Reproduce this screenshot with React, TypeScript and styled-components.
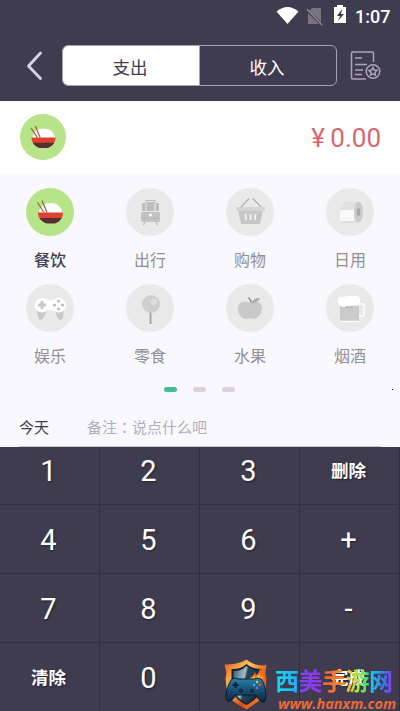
import React from "react";
import styled, { createGlobalStyle } from "styled-components";

const Global = createGlobalStyle`
  * { box-sizing: border-box; }
  html, body { margin: 0; padding: 0; overflow: hidden; }
  body { font-family: Roboto, "Noto Sans CJK SC", sans-serif; background: #faf8ff; }
  svg { display: block; flex: none; }
`;

const Screen = styled.div`
  position: relative;
  width: 400px;
  height: 711px;
  overflow: hidden;
  display: flex;
  flex-direction: column;
  background: #faf8ff;
`;

const Header = styled.header`
  height: 101px;
  flex: none;
  background: #403c50;
`;

const StatusBar = styled.div`
  height: 32px;
  display: flex;
  justify-content: flex-end;
  padding: 5px 9px 0 0;
`;

const Clock = styled.span`
  width: 36px;
  margin-left: 8px;
  color: #fff;
  font-size: 18px;
  line-height: 24px;
  font-weight: 500;
  white-space: nowrap;
`;

const NavBar = styled.div`
  display: flex;
  align-items: flex-start;
  padding: 13px 18px 0 23px;
`;

const BackButton = styled.div`
  width: 39px;
  padding-top: 5px;
`;

const Segments = styled.div`
  display: flex;
  width: 275px;
  height: 41px;
  border: 1px solid #a5a2b1;
  border-radius: 6px;
  overflow: hidden;
`;

const Segment = styled.div<{ $active?: boolean }>`
  flex: 1;
  display: flex;
  align-items: center;
  justify-content: center;
  padding: 2px 2px 0 0;
  font-size: 17.5px;
  color: ${(p) => (p.$active ? "#403c50" : "#fff")};
  background: ${(p) => (p.$active ? "#fff" : "transparent")};
  &:last-child { border-left: 1px solid #a5a2b1; }
`;

const BillButton = styled.div`
  margin-left: 13px;
  padding-top: 6px;
`;

const AmountBar = styled.section`
  height: 73px;
  flex: none;
  display: flex;
  align-items: flex-start;
  justify-content: space-between;
  padding: 13px 19px 0 20px;
  background: #fff;
`;

const Amount = styled.div`
  color: #da6670;
  font-size: 26px;
  line-height: 30px;
  padding-top: 9px;
  word-spacing: -1px;
`;

const CategoryGrid = styled.section`
  display: grid;
  grid-template-columns: repeat(4, 100px);
  grid-auto-rows: 96px;
  padding-top: 14px;
  flex: none;
`;

const Category = styled.div<{ $active?: boolean }>`
  display: flex;
  flex-direction: column;
  align-items: center;
  font-size: 16px;
  line-height: 22px;
  gap: 14px;
  color: ${(p) => (p.$active ? "#403c50" : "#929096")};
  font-weight: ${(p) => (p.$active ? 500 : 400)};
`;

const Disc = styled.div<{ $active?: boolean; $size: number }>`
  width: ${(p) => p.$size}px;
  height: ${(p) => p.$size}px;
  flex: none;
  border-radius: 50%;
  background: ${(p) => (p.$active ? "#b7e389" : "#e9e9ea")};
`;

const Pager = styled.div`
  display: flex;
  justify-content: center;
  gap: 16px;
  padding: 7px 1px 0 0;
  height: 32px;
  flex: none;
`;

const PageDot = styled.span<{ $active?: boolean }>`
  width: 13px;
  height: 5px;
  border-radius: 3px;
  background: ${(p) => (p.$active ? "#43bd94" : "#d7d5da")};
`;

const NoteRow = styled.div`
  display: flex;
  height: 35px;
  margin: 0 19px;
  flex: none;
  border-bottom: 1px solid #c6c4cf;
  font-size: 15px;
  line-height: 33px;
  color: #403c50;
`;

const Placeholder = styled.span`
  margin-left: 38px;
  color: #b1afb6;
`;

/* The Traditional Chinese face centres the full-width colon in its cell. */
const Colon = styled.span`
  font-family: "Noto Sans CJK TC", sans-serif;
  line-height: 0;
`;

const Keypad = styled.div`
  height: 265px;
  flex: none;
  display: grid;
  grid-template-columns: repeat(4, 100px);
  grid-template-rows: 58px repeat(3, 69px);
  background: #403c50;
`;

const Key = styled.div<{ $word?: boolean }>`
  display: flex;
  align-items: flex-end;
  justify-content: center;
  padding: 0 2px 0 0;
  height: 100%;
  border-right: 1px solid #322f40;
  border-bottom: 1px solid #322f40;
  color: #fff;
  text-shadow: 1px 1px 2px #24212e;
  font-size: ${(p) => (p.$word ? 17.5 : 29)}px;
  font-weight: ${(p) => (p.$word ? 700 : 400)};
  line-height: 65px;
`;

const Speck = styled.span`
  position: absolute;
  left: 392px;
  top: 389px;
  width: 1px;
  height: 1px;
  background: #000;
`;

const Watermark = styled.div`
  position: absolute;
  left: 222px;
  top: 658px;
  display: flex;
`;

const BrandText = styled.div`
  margin-left: 6px;
  padding-top: 6px;
`;

const BrandName = styled.div`
  display: flex;
  font-size: 24px;
  line-height: 31px;
  font-weight: 700;
  font-family: "Noto Sans CJK SC", sans-serif;
`;

const Glyph = styled.span<{ $fill: string }>`
  width: 23.5px;
  background: ${(p) => p.$fill};
  background-clip: text;
  -webkit-background-clip: text;
  color: transparent;
`;

const BrandUrl = styled.div`
  padding-left: 3px;
  font: italic 700 14.5px/17px "Open Sans", "Noto Sans", sans-serif;
  color: #e9693b;
  white-space: nowrap;
`;

const Noodles = ({ size }: { size: number }) => (
  <svg width={size} height={size} viewBox="0 0 48 48">
    <path d="M13 25C14 18 18 15 24.500 15S35 18 36.500 25z" fill="#fff" />
    <path d="M12 24.500h25c0 4-1.500 6-3 7.500H15c-2-2-3-4-3-7.500z" fill="#df4130" />
    <path d="M13.500 30h22c-2 4-5.500 5.500-8 5.500h-5c-4 0-7-2-9-5.500z" fill="#56302f" />
    <path d="M11.500 14.500 18 24.500M16 12.500l5 12" stroke="#9a6740" strokeWidth="1.300" />
  </svg>
);

const Train = () => (
  <svg width="48" height="48" viewBox="0 0 48 48">
    <path d="M20 15v-2.500h9V15" stroke="#bbb" fill="none" />
    <rect x="16" y="15" width="3.500" height="8" rx=".8" fill="#bdbdbe" />
    <rect x="20.500" y="14" width="8" height="9" fill="#bdbdbe" />
    <rect x="29.500" y="15" width="3.500" height="8" rx=".8" fill="#bdbdbe" />
    <rect x="15" y="24" width="19" height="10" rx="1" fill="#c3c3c4" />
    <path d="M16 30h17" stroke="#b5b5b6" />
    <path d="m19 34-1.500 3M30 34l1.500 3" stroke="#bbb" strokeWidth="1.300" />
    <circle cx="24.500" cy="27" r="1.500" fill="#fff" />
  </svg>
);

const Basket = () => (
  <svg width="48" height="48" viewBox="0 0 48 48">
    <path d="m15 19 8-8.500M35 19l-8-8.500" stroke="#b4b4b5" strokeWidth="1.500" />
    <path d="M12 22h25l-3 14H15z" fill="#c6c6c7" />
    <rect x="10" y="19" width="29" height="4" rx="1" fill="#d4d4d5" />
    <path d="m19.500 26 .5 6M24.500 26v6M29.500 26l-.5 6" stroke="#f4f4f4" strokeWidth="1.600" />
  </svg>
);

const Roll = () => (
  <svg width="48" height="48" viewBox="0 0 48 48">
    <path d="M14 21c1-5 5-7.500 10-7.500h8L28 34H14z" fill="#e1e1e2" />
    <path d="M14 22h14v12H14z" fill="#f8f8f8" />
    <path d="M15 34h16" stroke="#d0d0d1" />
    <ellipse cx="32.500" cy="24" rx="4.500" ry="10.500" fill="#cbcbcc" />
    <ellipse cx="32.500" cy="24" rx="1.700" ry="4" fill="#a6a6a7" />
  </svg>
);

const Gamepad = () => (
  <svg width="48" height="48" viewBox="0 0 48 48">
    <path d="M11 26h10l-3 7q-1.500 3-3.500 3t-2.500-3zM29 26h9l-1 7q-.5 3-2.500 3T31 33z" fill="#c9c9ca" />
    <path d="M16 14c4 0 6 2 9 2s5-2 8-2a7.200 7.200 0 1 1-5 12.500h-7A7.200 7.200 0 1 1 16 14z" fill="#fff" />
    <path d="M16 17v8M12 21h8" stroke="#c8c8c9" strokeWidth="2.800" />
    <g fill="#bcbcbd"><circle cx="32.500" cy="17" r="1.600" /><circle cx="32.500" cy="25" r="1.600" /><circle cx="28.500" cy="21" r="1.600" /><circle cx="36.500" cy="21" r="1.600" /></g>
  </svg>
);

const Lollipop = () => (
  <svg width="48" height="48" viewBox="0 0 48 48">
    <path d="M24.500 28v12" stroke="#a8a8a9" strokeWidth="2" />
    <circle cx="25" cy="20" r="9" fill="#cececf" />
    <ellipse cx="28" cy="18" rx="3" ry="3.500" fill="#dededf" />
  </svg>
);

const Apple = () => (
  <svg width="48" height="48" viewBox="0 0 48 48">
    <path d="M24 19c-8-4-12 1-12 6 0 6 5 10.500 8 10 2-1 5-1 7 0 4 0 9-5 9-11 0-5-5-8-12-5z" fill="#c9c9ca" />
    <path d="M25 19q0-3-2.500-5.500" stroke="#949495" strokeWidth="1.500" fill="none" />
    <path d="M25 19q2-5 9-5-2 5.500-9 5z" fill="#acacad" />
  </svg>
);

const Beer = () => (
  <svg width="48" height="48" viewBox="0 0 48 48">
    <path d="M33 20h3q2 0 2 2v8q0 2-2 2h-3" stroke="#f9f9f9" strokeWidth="2" fill="none" />
    <path d="M14 22h19v15H14z" fill="#cbcbcc" />
    <path d="M14 37.500h19" stroke="#fafafa" strokeWidth="1.500" />
    <path d="M12 17c-1-4 3-5 6-4 4-2 8-1 10-1 5-1 7 2 6 6-1 4-4 4-6 3-2 0-3 3-6 0-2 3-9 3-10-4z" fill="#fff" />
    <path d="m19 24 2-2 2 2 2-2 2 2" fill="#b5b5b6" />
  </svg>
);

const Emblem = () => (
  <svg width="47" height="52" viewBox="0 0 47 52">
    <defs>
      <linearGradient id="flame" x1="0" y1="0" x2="1" y2="1">
        <stop offset="0" stopColor="#e95517" /><stop offset=".35" stopColor="#ffc65b" />
        <stop offset=".65" stopColor="#e54713" /><stop offset="1" stopColor="#ffb12e" />
      </linearGradient>
      <linearGradient id="steel" x1="0" y1="0" x2="1" y2=".3">
        <stop offset="0" stopColor="#385e74" /><stop offset=".46" stopColor="#a5bdc8" />
        <stop offset=".54" stopColor="#24465e" /><stop offset="1" stopColor="#142d40" />
      </linearGradient>
      <linearGradient id="pad" x2="0" y2="1"><stop stopColor="#2682ad" /><stop offset=".55" stopColor="#174a6c" /><stop offset="1" stopColor="#0c2438" /></linearGradient>
    </defs>
    <path d="M24.500 1.500c6 5 12 6 18 6l2-1-1 8 1 6-1 10-2 9-7 5-10 7-10-6-8-6-2-10-1-9 1-6-2-8c8 0 16-1 22-5z" fill="url(#flame)" />
    <path d="M24.500 6c5 4 9 5 15 5v19c-2 9-8 13-15 17-8-4-13-9-15-17V11c6 0 11-1 15-5z" fill="#142534" />
    <path d="M24.500 8c5 4 8 4 13 4v17c-2 8-6 12-13 16-8-4-12-8-13-16V13c5 0 9-1 13-5z" fill="url(#steel)" />
    <path d="M25 21c4-1 7-4 8-7l1 3c2-1 4-4 4-7 2 4 4 4 5 6-1 3 1 5-1 8H26z" fill="#ef701d" />
    <path d="m29 21 4-3v3l5-5-1 4 4-2-3 5h-9z" fill="#ffd25e" />
    <path d="M10 21q4-2 6 0h16q3-2 7 0c3 3 5 11 5 18 0 8-6 6-10-2H14c-5 8-10 8-10 2 0-6 3-15 6-18z" fill="url(#pad)" stroke="#071c2b" />
    <path d="M13.500 24v6M10.500 27h6" stroke="#0a2435" strokeWidth="2.200" />
    <circle cx="19" cy="33" r="3" fill="#103149" stroke="#286584" strokeWidth=".6" />
    <circle cx="30" cy="33" r="3" fill="#103149" stroke="#286584" strokeWidth=".6" />
    <circle cx="35" cy="24" r="1.200" fill="#f4bd4b" /><circle cx="38" cy="27" r="1.200" fill="#e95037" />
    <circle cx="32" cy="27" r="1.200" fill="#4db7e0" /><circle cx="35" cy="30" r="1.200" fill="#a85ed0" />
  </svg>
);

const StatusIcons = () => (
  <svg width="72" height="22" viewBox="274 4 72 22">
    <path d="M275.500 10.500q11-9 22 0L286.500 23z" fill="#fff" />
    <path d="m308 10 3-3h9v16h-13v-12z" fill="#777382" />
    <path d="m305 8 16 16" stroke="#403c50" strokeWidth="3" />
    <path d="m306 8 15 16" stroke="#8e8a98" strokeWidth="1.400" />
    <path d="M336 4h6v2h3v16h-12V6h3z" fill="#fff" />
    <path d="m341 8-5 7h3l-2 5 6-7h-3z" fill="#403c50" />
  </svg>
);

const BackIcon = () => (
  <svg width="20" height="32" viewBox="0 0 20 32">
    <path d="M17.500 3 5.500 16l12 12.500" fill="none" stroke="#d9d5e4" strokeWidth="2.800" strokeLinecap="round" strokeLinejoin="round" />
  </svg>
);

const BillIcon = () => (
  <svg width="32" height="32" viewBox="350 51 32 32" fill="none" stroke="#aaa6b6" strokeWidth="1.500">
    <path d="M373.500 62V53q0-1-1-1h-20q-1 0-1 1v25q0 1 1 1H366M355 58h7M355 64.500h12M355 70h8M355 74.500h7" />
    <circle cx="373" cy="71.500" r="6.800" />
    <path d="m373 67.500 1.200 2.500 2.800.4-2 2 .4 2.700-2.400-1.300-2.500 1.300.5-2.700-2-2 2.700-.4z" />
  </svg>
);

const categories = [
  { label: "餐饮", icon: <Noodles size={48} />, active: true },
  { label: "出行", icon: <Train /> },
  { label: "购物", icon: <Basket /> },
  { label: "日用", icon: <Roll /> },
  { label: "娱乐", icon: <Gamepad /> },
  { label: "零食", icon: <Lollipop /> },
  { label: "水果", icon: <Apple /> },
  { label: "烟酒", icon: <Beer /> },
];

const keys = ["1", "2", "3", "删除", "4", "5", "6", "+", "7", "8", "9", "-", "清除", "0", "", "完成"];

const brand = [
  ["西", "linear-gradient(90deg,#12dff0,#25a9fa)"],
  ["美", "linear-gradient(90deg,#7148f4,#a22ef0)"],
  ["手", "linear-gradient(90deg,#f05a38,#ff9424)"],
  ["游", "linear-gradient(90deg,#ffb82d,#a6ef40 55%,#27db9a)"],
  ["网", "linear-gradient(90deg,#13d7ef,#367bf7 60%,#9134ed)"],
];

export default function App() {
  return (
    <Screen>
      <Global />
      <Header>
        <StatusBar><StatusIcons /><Clock>1:07</Clock></StatusBar>
        <NavBar>
          <BackButton><BackIcon /></BackButton>
          <Segments><Segment $active>支出</Segment><Segment>收入</Segment></Segments>
          <BillButton><BillIcon /></BillButton>
        </NavBar>
      </Header>
      <AmountBar>
        <Disc $active $size={46}><Noodles size={46} /></Disc>
        <Amount>¥ 0.00</Amount>
      </AmountBar>
      <CategoryGrid>
        {categories.map((c) => (
          <Category key={c.label} $active={c.active}>
            <Disc $active={c.active} $size={48}>{c.icon}</Disc>
            {c.label}
          </Category>
        ))}
      </CategoryGrid>
      <Pager><PageDot $active /><PageDot /><PageDot /></Pager>
      <NoteRow>今天<Placeholder>备注<Colon>：</Colon>说点什么吧</Placeholder></NoteRow>
      <Keypad>
        {keys.map((k, i) => <Key key={i} $word={k.length > 1}>{k}</Key>)}
      </Keypad>
      <Speck />
      <Watermark>
        <Emblem />
        <BrandText>
          <BrandName>{brand.map(([t, fill]) => <Glyph key={t} $fill={fill}>{t}</Glyph>)}</BrandName>
          <BrandUrl>www.hanxm.com</BrandUrl>
        </BrandText>
      </Watermark>
    </Screen>
  );
}
